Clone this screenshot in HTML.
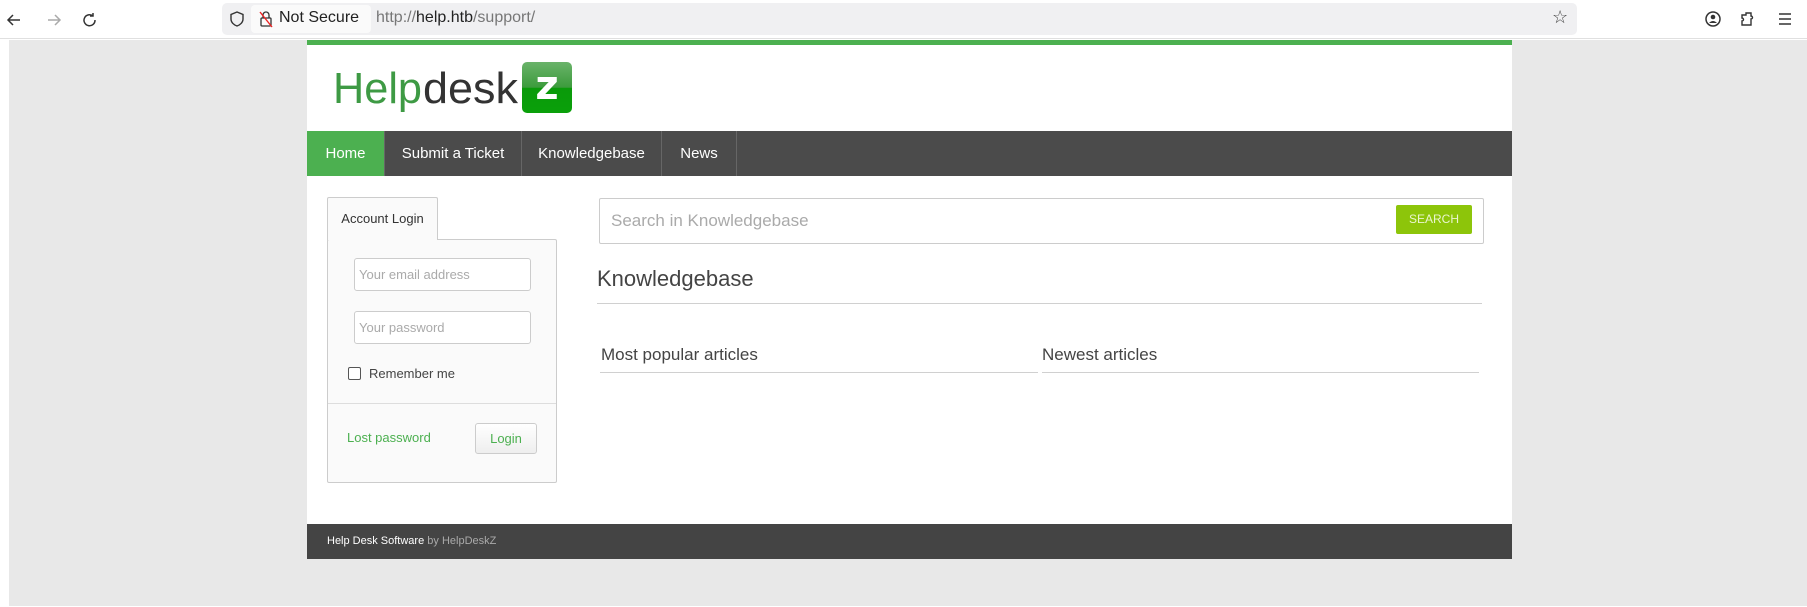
<!DOCTYPE html>
<html><head><meta charset="utf-8"><style>
*{box-sizing:border-box;margin:0;padding:0}
body{width:1807px;height:607px;background:#fff;position:relative;overflow:hidden;font-family:"Liberation Sans",sans-serif}
.a{position:absolute}
.cond{font-family:"Liberation Sans Narrow","Liberation Sans",sans-serif}
</style></head><body>
<!-- browser toolbar -->
<div class="a" style="left:0;top:0;width:1807px;height:39px;background:#fff;border-bottom:1px solid #e0e0e0"></div>
<svg class="a" style="left:4px;top:10px" width="100" height="20" viewBox="0 0 100 20">
<path d="M16 10H4M9 5L4 10L9 15" stroke="#333" stroke-width="1.5" fill="none"/>
<path d="M44 10H56M51 5L56 10L51 15" stroke="#aaa" stroke-width="1.5" fill="none"/>
<path d="M89 6A5.5 5.5 0 1 0 91 10M89 3V6H86" stroke="#333" stroke-width="1.5" fill="none"/>
</svg>
<div class="a" style="left:222px;top:3px;width:1355px;height:32px;background:#f0f0f2;border-radius:5px"></div>
<svg class="a" style="left:228px;top:10px" width="18" height="18" viewBox="0 0 18 18"><path d="M9 2L3 4.5V9C3 12.5 6 15 9 16C12 15 15 12.5 15 9V4.5Z" stroke="#333" stroke-width="1.4" fill="none"/></svg>
<div class="a" style="left:251px;top:5px;width:120px;height:28px;background:#fafafa;border-radius:4px"></div>
<svg class="a" style="left:258px;top:10px" width="16" height="18" viewBox="0 0 16 18"><rect x="3" y="8" width="10" height="8" rx="1" stroke="#333" fill="none" stroke-width="1.3"/><path d="M5 8V5A3 3 0 0 1 11 5V8" stroke="#333" fill="none" stroke-width="1.3"/><path d="M2 2L14 17" stroke="#e22" stroke-width="1.4"/></svg>
<div class="a" style="left:279px;top:9px;font-size:16px;color:#222">Not Secure</div>
<div class="a" style="left:376px;top:9px;font-size:16px;color:#777">http://<span style="color:#222">help.htb</span>/support/</div>
<div class="a" style="left:1552px;top:7px;font-size:18px;color:#444">☆</div>
<svg class="a" style="left:1702px;top:9px" width="100" height="22" viewBox="0 0 100 22">
<circle cx="11" cy="10" r="7" stroke="#333" stroke-width="1.5" fill="none"/><circle cx="11" cy="8" r="2.3" fill="#333"/><path d="M7 14Q11 10 15 14" fill="#333"/>
<path d="M44 4H49V7A1.5 1.5 0 0 1 49 10V16H40V12A1.5 1.5 0 0 0 40 9V6H44Z" stroke="#333" stroke-width="1.4" fill="none"/>
<path d="M77 5H89M77 10H89M77 15H89" stroke="#333" stroke-width="1.5"/>
</svg>
<!-- gray viewport -->
<div class="a" style="left:9px;top:40px;width:1798px;height:566px;background:#e8e8e8"></div>
<!-- page -->
<div class="a" style="left:307px;top:40px;width:1205px;height:519px;background:#fff"></div>
<div class="a" style="left:307px;top:40px;width:1205px;height:5px;background:#4cb050"></div>
<!-- logo -->
<svg class="a" style="left:330px;top:58px" width="200" height="60" viewBox="0 0 200 60">
<text x="3" y="45" font-family="Liberation Sans, sans-serif" font-size="44" fill="#3e9a44" textLength="89" lengthAdjust="spacingAndGlyphs">Help</text>
<text x="93" y="45" font-family="Liberation Sans, sans-serif" font-size="44" fill="#333" textLength="95" lengthAdjust="spacingAndGlyphs">desk</text>
</svg>
<div class="a" style="left:522px;top:62px;width:50px;height:51px;border-radius:5px;background:linear-gradient(#6ab36a 0%,#3c9b3c 50%,#0a9a0a 51%,#0aa00a 100%);color:#fff;font-size:40px;font-weight:bold;text-align:center;line-height:48px;font-family:'DejaVu Sans',sans-serif">z</div>
<!-- nav -->
<div class="a" style="left:307px;top:131px;width:1205px;height:45px;background:#4b4b4b"></div>
<div class="a" style="left:307px;top:131px;width:77px;height:45px;background:#4cb050"></div>
<div class="a cond" style="left:307px;top:131px;height:45px;line-height:45px;font-size:15px;color:#fff;display:flex">
<span style="width:77px;text-align:center">Home</span>
<span style="width:138px;text-align:center;border-left:1px solid #666;border-right:1px solid #666">Submit a Ticket</span>
<span style="width:140px;text-align:center;border-right:1px solid #666">Knowledgebase</span>
<span style="width:75px;text-align:center;border-right:1px solid #666">News</span>
</div>
<!-- login -->
<div class="a" style="left:327px;top:239px;width:230px;height:244px;background:#fafafa;border:1px solid #ccc;border-radius:2px"></div>
<div class="a cond" style="left:327px;top:197px;width:111px;height:43px;background:#fafafa;border:1px solid #ccc;border-bottom:none;border-radius:2px 2px 0 0;font-size:13px;color:#333;text-align:center;line-height:42px">Account Login</div>
<div class="a cond" style="left:354px;top:258px;width:177px;height:33px;background:#fff;border:1px solid #ccc;border-radius:3px;font-size:13px;color:#aaa;padding-left:4px;line-height:31px">Your email address</div>
<div class="a cond" style="left:354px;top:311px;width:177px;height:33px;background:#fff;border:1px solid #ccc;border-radius:3px;font-size:13px;color:#aaa;padding-left:4px;line-height:31px">Your password</div>
<div class="a" style="left:348px;top:367px;width:13px;height:13px;border:1px solid #555;border-radius:2px;background:#fff"></div>
<div class="a cond" style="left:369px;top:366px;font-size:13px;color:#444">Remember me</div>
<div class="a" style="left:328px;top:403px;width:228px;height:1px;background:#ddd"></div>
<div class="a cond" style="left:347px;top:430px;font-size:13px;color:#4cb050">Lost password</div>
<div class="a cond" style="left:475px;top:423px;width:62px;height:31px;border:1px solid #ccc;border-radius:3px;background:linear-gradient(#fff,#eee);font-size:13px;color:#4cb050;text-align:center;line-height:29px">Login</div>
<!-- search -->
<div class="a cond" style="left:599px;top:198px;width:885px;height:46px;border:1px solid #ccc;border-radius:2px;font-size:17px;color:#aaa;padding-left:11px;line-height:44px">Search in Knowledgebase</div>
<div class="a cond" style="left:1396px;top:205px;width:76px;height:29px;background:#8dc50a;border-radius:2px;color:#eaf5d0;font-size:12px;text-align:center;line-height:29px">SEARCH</div>
<div class="a cond" style="left:597px;top:266px;font-size:22px;color:#444">Knowledgebase</div>
<div class="a" style="left:597px;top:303px;width:885px;height:1px;background:#d0d0d0"></div>
<div class="a cond" style="left:601px;top:345px;font-size:17px;color:#444">Most popular articles</div>
<div class="a" style="left:600px;top:372px;width:438px;height:1px;background:#d0d0d0"></div>
<div class="a cond" style="left:1042px;top:345px;font-size:17px;color:#444">Newest articles</div>
<div class="a" style="left:1042px;top:372px;width:437px;height:1px;background:#d0d0d0"></div>
<!-- footer -->
<div class="a" style="left:307px;top:524px;width:1205px;height:35px;background:#444"></div>
<div class="a cond" style="left:327px;top:535px;font-size:11px;color:#fff">Help Desk Software <span style="color:#aaa">by HelpDeskZ</span></div>
</body></html>
